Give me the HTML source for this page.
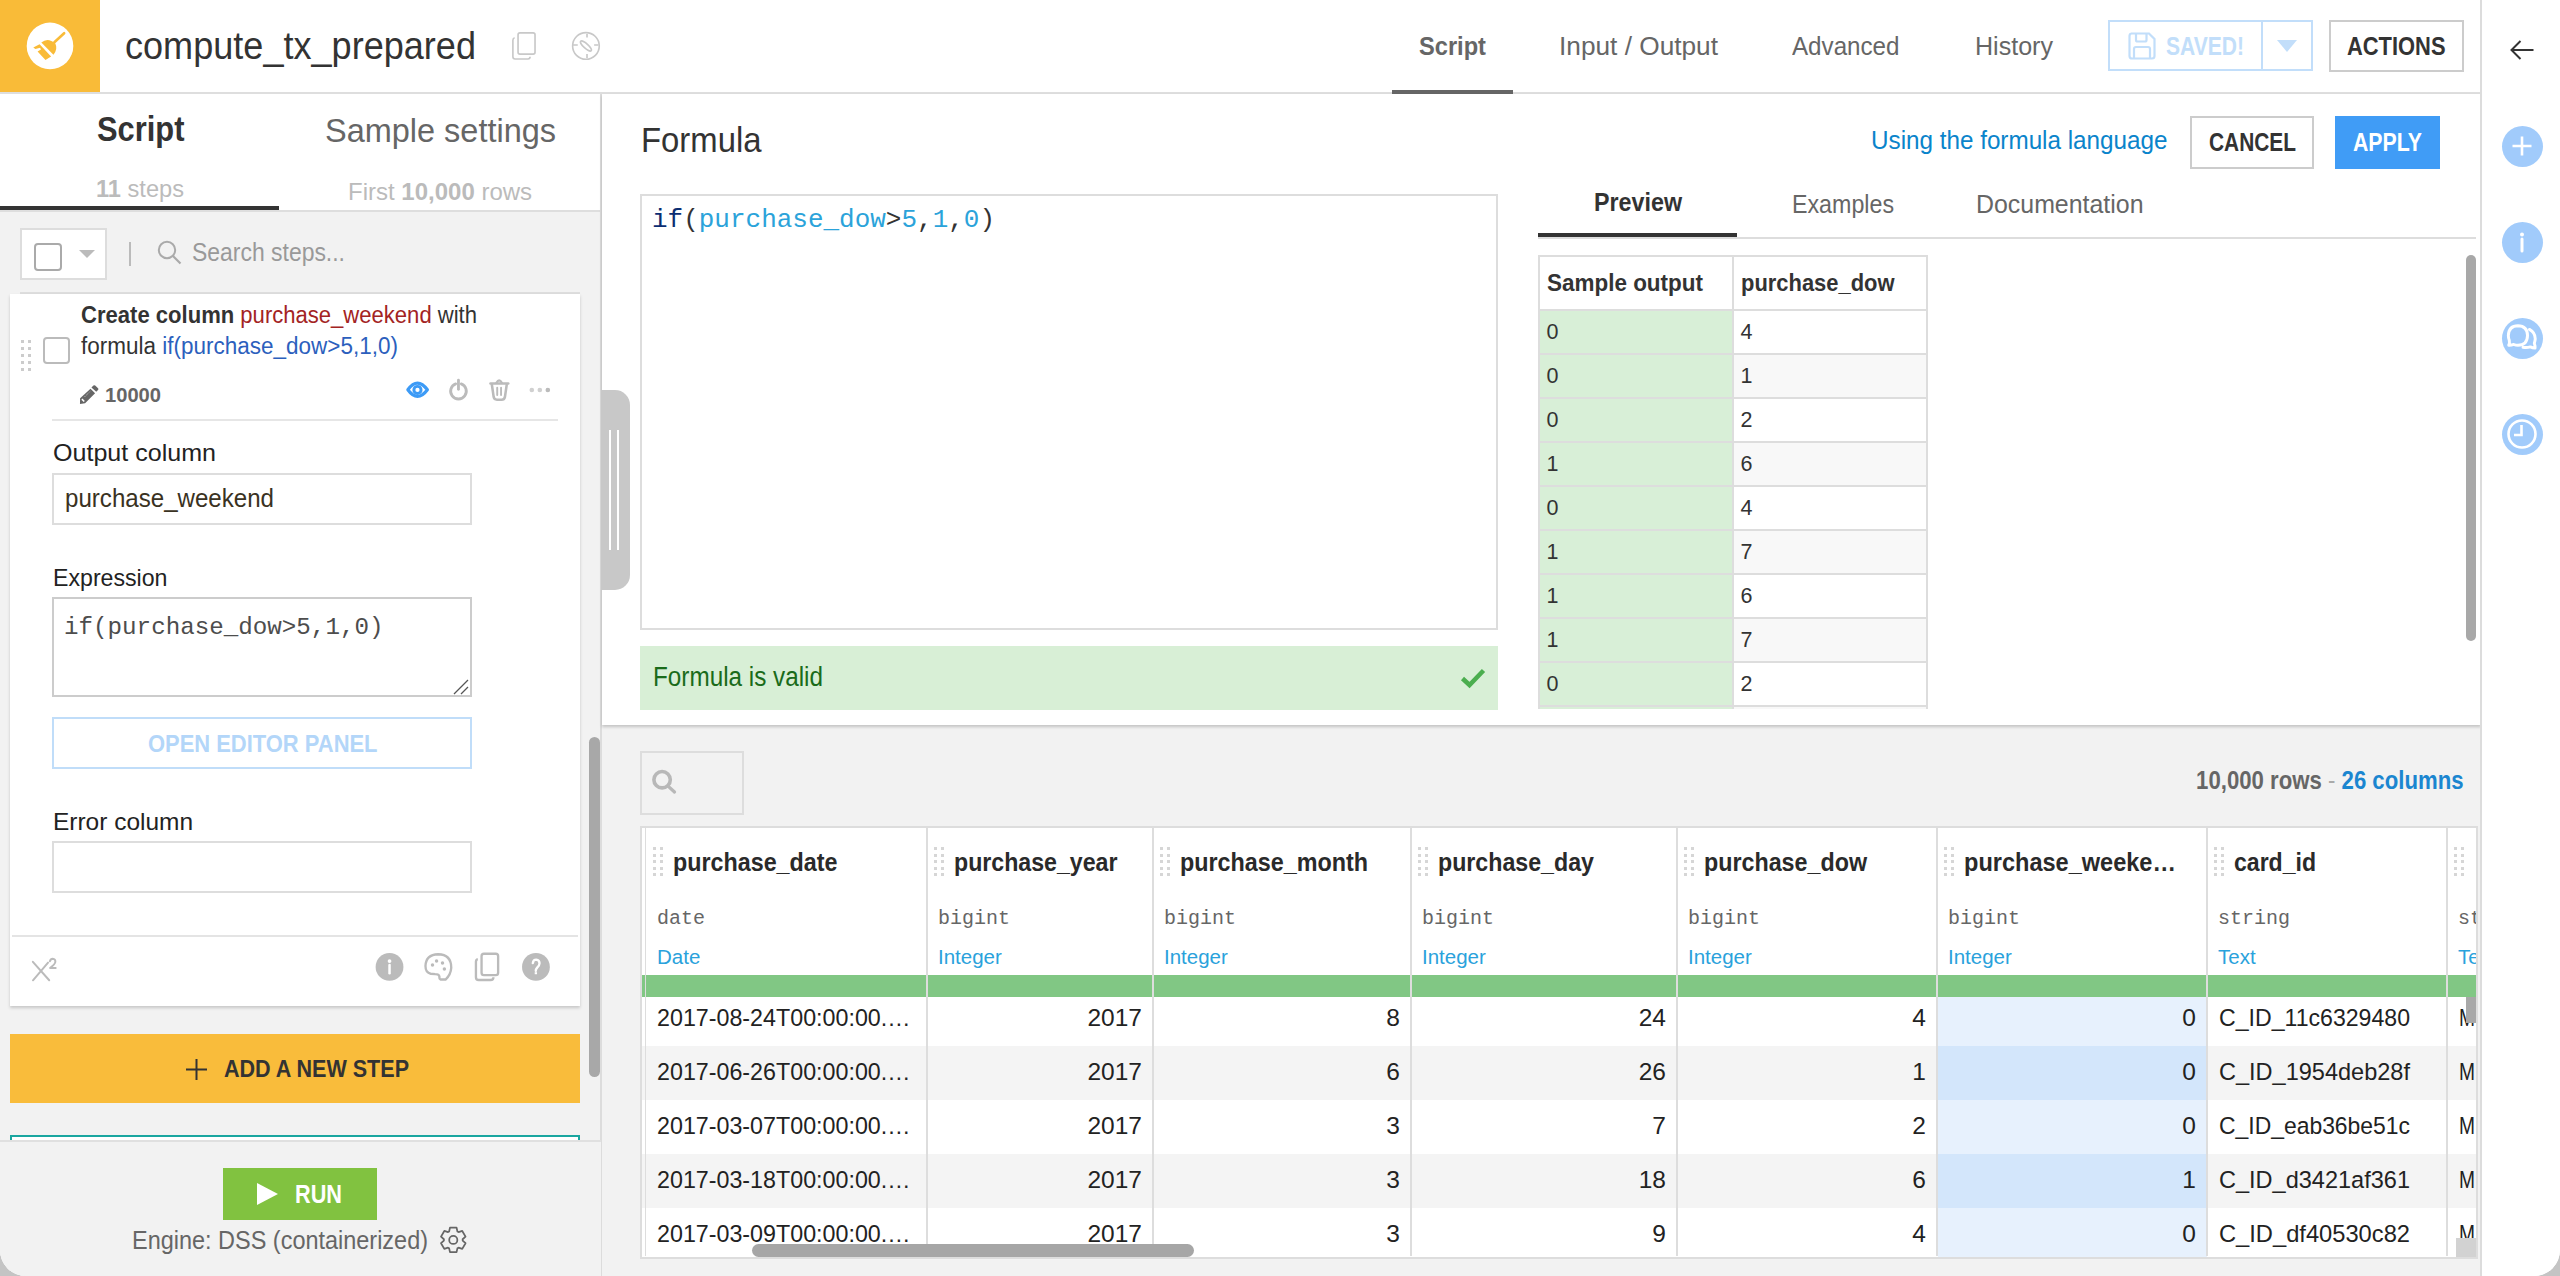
<!DOCTYPE html>
<html><head><meta charset="utf-8"><title>compute_tx_prepared</title><style>
html,body{margin:0;padding:0;}
body{width:2560px;height:1276px;overflow:hidden;background:#c4c4c4;position:relative;font-family:'Liberation Sans',sans-serif;}
#app{position:absolute;left:0;top:0;width:2560px;height:1276px;background:#fff;overflow:hidden;border-radius:0 0 26px 26px;}
.a{position:absolute;white-space:nowrap;}
svg.a{overflow:visible;}
</style></head><body><div id="app">
<div class="a" style="left:0px;top:0px;width:2481px;height:92px;background:#fff;"></div>
<div class="a" style="left:0px;top:92px;width:2481px;height:2px;background:#dedede;"></div>
<div class="a" style="left:0px;top:0px;width:100px;height:92px;background:#f9bb38;"></div>
<svg class="a" style="left:24px;top:20px" width="52" height="52" viewBox="0 0 1276 1276">
<circle cx="638" cy="636" r="572" fill="#fff"/>
<g fill="#f9bb38">
<path d="M745 545 L985 325" stroke="#f9bb38" stroke-width="64" stroke-linecap="round"/>
<path d="M425 552 Q585 415 770 578 Q835 720 722 855 Z"/>
<path d="M228 672 L382 598 L665 893 L527 982 L333 770 L415 722 L395 683 L280 712 Z"/>
</g></svg>
<div class="t a" style="top:25.85px;font-size:39px;line-height:39px;color:#333;font-weight:400;font-family:'Liberation Sans', sans-serif;left:125px;transform-origin:0 0;transform:scaleX(0.9251);">compute_tx_prepared</div>
<svg class="a" style="left:500px;top:24px" width="110" height="44" viewBox="0 0 2560 1024">
<g fill="none" stroke="#c8c8c8" stroke-width="38">
<rect x="420" y="205" width="395" height="495" rx="45"/>
<path d="M340 322 Q300 335 300 380 V765 Q300 815 350 815 H650 Q700 815 700 765"/>
<circle cx="2000" cy="510" r="310"/>
<path d="M2025 230 V315 M2025 700 V790 M1700 490 H1810 M2190 490 H2290"/>
<ellipse cx="2000" cy="512" rx="165" ry="52" transform="rotate(42 2000 512)"/>
</g></svg>
<div class="t a" style="top:32.90px;font-size:26px;line-height:26px;color:#666;font-weight:700;font-family:'Liberation Sans', sans-serif;left:1419px;transform-origin:0 0;transform:scaleX(0.9092);">Script</div>
<div class="a" style="left:1392px;top:90px;width:121px;height:4px;background:#666;"></div>
<div class="t a" style="top:32.90px;font-size:26px;line-height:26px;color:#666;font-weight:400;font-family:'Liberation Sans', sans-serif;left:1559px;transform-origin:0 0;transform:scaleX(1.0091);">Input / Output</div>
<div class="t a" style="top:32.90px;font-size:26px;line-height:26px;color:#666;font-weight:400;font-family:'Liberation Sans', sans-serif;left:1791.5px;transform-origin:0 0;transform:scaleX(0.9295);">Advanced</div>
<div class="t a" style="top:32.90px;font-size:26px;line-height:26px;color:#666;font-weight:400;font-family:'Liberation Sans', sans-serif;left:1975px;transform-origin:0 0;transform:scaleX(0.9641);">History</div>
<div class="a" style="left:2108px;top:20px;width:205px;height:51px;box-sizing:border-box;border:2px solid #c2defa;background:#fff;"></div>
<div class="a" style="left:2261px;top:20px;width:2px;height:51px;background:#c2defa;"></div>
<svg class="a" style="left:2128px;top:32px" width="28" height="28" viewBox="0 0 28 28">
<path d="M3 1.5 H21 L26.5 7 V24 Q26.5 26.5 24 26.5 H4 Q1.5 26.5 1.5 24 V4 Q1.5 1.5 4 1.5 Z" fill="none" stroke="#c2defa" stroke-width="2.2"/>
<path d="M8 2 V8 Q8 9.5 9.5 9.5 H17 Q18.5 9.5 18.5 8 V2" fill="none" stroke="#c2defa" stroke-width="2.2"/>
<path d="M6 26 V17 Q6 15 8 15 H20 Q22 15 22 17 V26" fill="none" stroke="#c2defa" stroke-width="2.2"/>
</svg>
<div class="t a" style="top:33.75px;font-size:25px;line-height:25px;color:#c2defa;font-weight:700;font-family:'Liberation Sans', sans-serif;left:2165.5px;transform-origin:0 0;transform:scaleX(0.8422);">SAVED!</div>
<svg class="a" style="left:2277px;top:40px" width="20" height="12" viewBox="0 0 20 12"><path d="M0 0 H20 L10 12 Z" fill="#c2defa"/></svg>
<div class="a" style="left:2329px;top:20px;width:135px;height:52px;box-sizing:border-box;border:2px solid #ccc;background:#fff;"></div>
<div class="t a" style="top:33.75px;font-size:25px;line-height:25px;color:#333;font-weight:700;font-family:'Liberation Sans', sans-serif;left:2347px;transform-origin:0 0;transform:scaleX(0.8756);">ACTIONS</div>
<div class="a" style="left:0px;top:94px;width:601px;height:1182px;background:#f2f2f2;"></div>
<div class="a" style="left:0px;top:94px;width:601px;height:116px;background:#fff;"></div>
<div class="a" style="left:0px;top:210px;width:601px;height:2px;background:#dedede;"></div>
<div class="a" style="left:0px;top:206px;width:279px;height:4px;background:#333;"></div>
<div class="a" style="left:600px;top:94px;width:2px;height:1182px;background:#dcdcdc;"></div>
<div class="t a" style="top:111.25px;font-size:35px;line-height:35px;color:#333;font-weight:700;font-family:'Liberation Sans', sans-serif;left:96.5px;transform-origin:0 0;transform:scaleX(0.8820);">Script</div>
<div class="t a" style="top:113.10px;font-size:34px;line-height:34px;color:#666;font-weight:400;font-family:'Liberation Sans', sans-serif;left:324.5px;transform-origin:0 0;transform:scaleX(0.9549);">Sample settings</div>
<div class="t a" style="top:177.18px;font-size:24.5px;line-height:24.5px;color:#bbb;font-weight:400;font-family:'Liberation Sans', sans-serif;left:96px;transform-origin:0 0;transform:scaleX(0.9641);"><b>11</b> steps</div>
<div class="t a" style="top:179.60px;font-size:24px;line-height:24px;color:#bbb;font-weight:400;font-family:'Liberation Sans', sans-serif;left:348px;">First <b>10,000</b> rows</div>
<div class="a" style="left:20px;top:228px;width:87px;height:52px;box-sizing:border-box;border:2px solid #ddd;background:#fff;"></div>
<div class="a" style="left:34px;top:243px;width:28px;height:28px;box-sizing:border-box;border:2px solid #aaa;border-radius:4px;background:#fff;"></div>
<svg class="a" style="left:79px;top:250px" width="16" height="8" viewBox="0 0 16 8"><path d="M0 0 H16 L8 8 Z" fill="#bbb"/></svg>
<div class="a" style="left:129px;top:242px;width:2px;height:24px;background:#bbb;"></div>
<svg class="a" style="left:157px;top:240px" width="25" height="25" viewBox="0 0 25 25"><circle cx="10" cy="10" r="8.2" fill="none" stroke="#aaa" stroke-width="2"/><path d="M16 16 L23.5 23.5" stroke="#aaa" stroke-width="2.2"/></svg>
<div class="t a" style="top:238.90px;font-size:26px;line-height:26px;color:#999;font-weight:400;font-family:'Liberation Sans', sans-serif;left:192px;transform-origin:0 0;transform:scaleX(0.8822);">Search steps...</div>
<div class="a" style="left:20px;top:292px;width:560px;height:2px;background:#ddd;"></div>
<div class="a" style="left:10px;top:294px;width:570px;height:712px;background:#fff;box-shadow:0 2px 3px rgba(0,0,0,0.18);"></div>
<div class="a" style="left:21px;top:340px;width:3px;height:3px;background:#ccc;"></div>
<div class="a" style="left:28px;top:340px;width:3px;height:3px;background:#ccc;"></div>
<div class="a" style="left:21px;top:347px;width:3px;height:3px;background:#ccc;"></div>
<div class="a" style="left:28px;top:347px;width:3px;height:3px;background:#ccc;"></div>
<div class="a" style="left:21px;top:354px;width:3px;height:3px;background:#ccc;"></div>
<div class="a" style="left:28px;top:354px;width:3px;height:3px;background:#ccc;"></div>
<div class="a" style="left:21px;top:361px;width:3px;height:3px;background:#ccc;"></div>
<div class="a" style="left:28px;top:361px;width:3px;height:3px;background:#ccc;"></div>
<div class="a" style="left:21px;top:368px;width:3px;height:3px;background:#ccc;"></div>
<div class="a" style="left:28px;top:368px;width:3px;height:3px;background:#ccc;"></div>
<div class="a" style="left:43px;top:337px;width:27px;height:27px;box-sizing:border-box;border:2px solid #bbb;border-radius:4px;background:#fff;"></div>
<div class="t a" style="top:304.02px;font-size:23.5px;line-height:23.5px;color:#333;font-weight:400;font-family:'Liberation Sans', sans-serif;left:81px;transform-origin:0 0;transform:scaleX(0.9386);"><b>Create column</b> <span style="color:#a32323">purchase_weekend</span> with</div>
<div class="t a" style="top:335.02px;font-size:23.5px;line-height:23.5px;color:#333;font-weight:400;font-family:'Liberation Sans', sans-serif;left:81px;transform-origin:0 0;transform:scaleX(0.9573);">formula <span style="color:#2c5fbd">if(purchase_dow&gt;5,1,0)</span></div>
<svg class="a" style="left:70px;top:370px" width="100" height="40" viewBox="0 0 2560 1024">
<path d="M258 722 L525 478 L642 598 L385 852 L255 868 Z" fill="#666"/>
<path d="M548 448 L600 398 Q622 378 645 398 L718 468 Q738 490 718 512 L672 556 Z" fill="#666"/>
<path d="M305 745 L365 805" stroke="#fff" stroke-width="40"/>
<path d="M370 690 L520 545" stroke="#fff" stroke-width="14" stroke-dasharray="30 20"/>
</svg>
<div class="t a" style="top:384.57px;font-size:20.5px;line-height:20.5px;color:#666;font-weight:700;font-family:'Liberation Sans', sans-serif;left:104.5px;transform-origin:0 0;transform:scaleX(0.9822);">10000</div>
<svg class="a" style="left:396px;top:372px" width="164" height="36" viewBox="0 0 2560 562">
<path d="M185 278 Q335 70 490 278 Q335 486 185 278 Z" fill="none" stroke="#3d9bf6" stroke-width="50" stroke-linejoin="round"/>
<circle cx="335" cy="280" r="56" fill="none" stroke="#3d9bf6" stroke-width="46"/>
<g fill="none" stroke="#bbb" stroke-linecap="round">
<path d="M932 185 A122 122 0 1 0 1018 185" stroke-width="44"/>
<path d="M975 128 V270" stroke-width="44"/>
<path d="M1475 180 H1752" stroke-width="40"/>
<path d="M1568 168 Q1610 95 1652 168" stroke-width="36"/>
<path d="M1497 200 L1525 392 Q1533 432 1575 432 H1650 Q1690 432 1700 392 L1728 200" stroke-width="40" stroke-linejoin="round"/>
<path d="M1580 245 V360 M1640 245 V360" stroke-width="30"/>
</g>
<circle cx="2120" cy="280" r="36" fill="#d0d0d0"/><circle cx="2245" cy="280" r="36" fill="#d0d0d0"/><circle cx="2370" cy="280" r="36" fill="#bbb"/>
</svg>
<div class="a" style="left:52px;top:419px;width:506px;height:2px;background:#e6e6e6;"></div>
<div class="t a" style="top:441.10px;font-size:24px;line-height:24px;color:#222;font-weight:400;font-family:'Liberation Sans', sans-serif;left:53px;transform-origin:0 0;transform:scaleX(1.0442);">Output column</div>
<div class="a" style="left:52px;top:473px;width:420px;height:52px;box-sizing:border-box;border:2px solid #ddd;background:#fff;"></div>
<div class="t a" style="top:485.40px;font-size:26px;line-height:26px;color:#3a3222;font-weight:400;font-family:'Liberation Sans', sans-serif;left:65px;transform-origin:0 0;transform:scaleX(0.9268);">purchase_weekend</div>
<div class="t a" style="top:566.10px;font-size:24px;line-height:24px;color:#222;font-weight:400;font-family:'Liberation Sans', sans-serif;left:53px;transform-origin:0 0;transform:scaleX(0.9643);">Expression</div>
<div class="a" style="left:52px;top:597px;width:420px;height:100px;box-sizing:border-box;border:2px solid #ccc;background:#fff;"></div>
<div class="t a" style="top:616.10px;font-size:24px;line-height:24px;color:#4d4d4d;font-weight:400;font-family:'Liberation Mono', monospace;left:64px;transform-origin:0 0;transform:scaleX(1.0083);">if(purchase_dow&gt;5,1,0)</div>
<svg class="a" style="left:452px;top:678px" width="17" height="17" viewBox="0 0 17 17"><path d="M16 2 L2 16 M16 9 L9 16" stroke="#555" stroke-width="1.3"/></svg>
<div class="a" style="left:52px;top:717px;width:420px;height:52px;box-sizing:border-box;border:2px solid #c0ddf9;background:#fff;"></div>
<div class="t a" style="top:731.60px;font-size:24px;line-height:24px;color:#b3d6f9;font-weight:700;font-family:'Liberation Sans', sans-serif;left:147.5px;transform-origin:0 0;transform:scaleX(0.9138);">OPEN EDITOR PANEL</div>
<div class="t a" style="top:810.10px;font-size:24px;line-height:24px;color:#222;font-weight:400;font-family:'Liberation Sans', sans-serif;left:53px;transform-origin:0 0;transform:scaleX(1.0191);">Error column</div>
<div class="a" style="left:52px;top:841px;width:420px;height:52px;box-sizing:border-box;border:2px solid #ddd;background:#fff;"></div>
<div class="a" style="left:12px;top:935px;width:566px;height:2px;background:#e4e4e4;"></div>
<svg class="a" style="left:20px;top:945px" width="60" height="45" viewBox="0 0 1701 1276">
<g fill="none" stroke="#bbb" stroke-width="56" stroke-linecap="round">
<path d="M365 478 L828 1000 M795 500 L368 1000"/>
<path d="M848 462 Q868 390 928 390 Q1008 395 1002 482 Q995 540 852 650 H1012" stroke-linejoin="round"/>
</g></svg>
<svg class="a" style="left:360px;top:945px" width="200" height="45" viewBox="0 0 2560 576">
<circle cx="378" cy="280" r="178" fill="#bbb"/>
<circle cx="378" cy="205" r="24" fill="#fff"/>
<path d="M378 255 V362" stroke="#fff" stroke-width="32" stroke-linecap="round"/>
<path d="M1000 118 Q1168 122 1168 290 Q1163 380 1095 442 L1032 442 Q1014 438 1016 402 Q1012 372 962 372 L905 368 Q838 356 838 270 Q842 122 1000 118 Z" fill="none" stroke="#bbb" stroke-width="30" stroke-linejoin="round"/>
<circle cx="928" cy="255" r="22" fill="#bbb"/><circle cx="980" cy="205" r="22" fill="#bbb"/><circle cx="1056" cy="230" r="22" fill="#bbb"/><circle cx="1080" cy="307" r="22" fill="#bbb"/>
<rect x="1556" y="112" width="212" height="274" rx="30" fill="none" stroke="#bbb" stroke-width="30"/>
<path d="M1508 180 Q1484 185 1484 215 V412 Q1484 448 1518 448 H1672 Q1708 448 1708 412" fill="none" stroke="#bbb" stroke-width="30"/>
<circle cx="2252" cy="280" r="178" fill="#bbb"/>
<path d="M2212 232 Q2218 188 2256 188 Q2298 192 2298 235 Q2298 262 2268 290 Q2248 312 2250 332" fill="none" stroke="#fff" stroke-width="30" stroke-linecap="round"/>
<rect x="2236" y="348" width="30" height="26" fill="#fff"/>
</svg>
<div class="a" style="left:10px;top:1034px;width:570px;height:69px;background:#f9bc3b;"></div>
<svg class="a" style="left:186px;top:1059px" width="21" height="21" viewBox="0 0 21 21"><path d="M10.5 0 V21 M0 10.5 H21" stroke="#333" stroke-width="2"/></svg>
<div class="t a" style="top:1056.60px;font-size:24px;line-height:24px;color:#333;font-weight:700;font-family:'Liberation Sans', sans-serif;left:224px;transform-origin:0 0;transform:scaleX(0.8970);">ADD A NEW STEP</div>
<div class="a" style="left:10px;top:1135px;width:570px;height:6px;box-sizing:border-box;border:2px solid #1aa6a0;border-bottom:none;background:#fff;"></div>
<div class="a" style="left:0px;top:1140px;width:601px;height:136px;background:#f2f2f2;"></div>
<div class="a" style="left:0px;top:1140px;width:601px;height:2px;background:#e0e0e0;"></div>
<div class="a" style="left:589px;top:737px;width:11px;height:340px;background:#a8a8a8;border-radius:6px;"></div>
<div class="a" style="left:223px;top:1168px;width:154px;height:52px;background:#81c240;"></div>
<svg class="a" style="left:257px;top:1183px" width="21" height="22" viewBox="0 0 21 22"><path d="M0 0 L21 11 L0 22 Z" fill="#fff"/></svg>
<div class="t a" style="top:1181.75px;font-size:25px;line-height:25px;color:#fff;font-weight:700;font-family:'Liberation Sans', sans-serif;left:295px;transform-origin:0 0;transform:scaleX(0.8676);">RUN</div>
<div class="t a" style="top:1226.90px;font-size:26px;line-height:26px;color:#666;font-weight:400;font-family:'Liberation Sans', sans-serif;left:132px;transform-origin:0 0;transform:scaleX(0.9023);">Engine: DSS (containerized)</div>
<svg class="a" style="left:434px;top:1220px" width="40" height="40" viewBox="0 0 1276 1276">
<path d="M747 365 L720 244 L510 244 L483 365 L447 386 L329 349 L224 530 L316 614 L316 656 L224 740 L329 921 L447 884 L483 905 L510 1026 L720 1026 L747 905 L783 884 L901 921 L1006 740 L914 656 L914 614 L1006 530 L901 349 L783 386 Z" fill="none" stroke="#666" stroke-width="56" stroke-linejoin="round"/>
<circle cx="615" cy="635" r="130" fill="none" stroke="#666" stroke-width="56"/>
</svg>
<div class="a" style="left:602px;top:94px;width:1879px;height:1182px;background:#f2f2f2;"></div>
<div class="a" style="left:640px;top:751px;width:104px;height:64px;box-sizing:border-box;border:2px solid #ddd;background:#f2f2f2;"></div>
<svg class="a" style="left:652px;top:769px" width="25" height="25" viewBox="0 0 25 25"><circle cx="10.1" cy="10.7" r="8.2" fill="none" stroke="#b8b8b8" stroke-width="3.6"/><path d="M16.6 17.6 L22.5 23" stroke="#b8b8b8" stroke-width="3.3" stroke-linecap="round"/></svg>
<div class="t a" style="top:767.75px;font-size:25px;line-height:25px;color:#666;font-weight:400;font-family:'Liberation Sans', sans-serif;right:96.5px;transform-origin:100% 0;transform:scaleX(0.8870);"><b>10,000 rows</b> <span style="color:#aaa">-</span> <b style="color:#1b86d0">26 columns</b></div>
<div class="a" style="left:640px;top:826px;width:1838px;height:433px;box-sizing:border-box;border:2px solid #ddd;background:#fff;"></div>
<div class="a" style="left:642px;top:997px;width:1834px;height:48.5px;background:#fff;"></div>
<div class="a" style="left:642px;top:1045.5px;width:1834px;height:54.0px;background:#f4f4f4;"></div>
<div class="a" style="left:642px;top:1099.5px;width:1834px;height:54.0px;background:#fff;"></div>
<div class="a" style="left:642px;top:1153.5px;width:1834px;height:54.0px;background:#f4f4f4;"></div>
<div class="a" style="left:642px;top:1207.5px;width:1834px;height:49.5px;background:#fff;"></div>
<div class="a" style="left:642px;top:975px;width:1834px;height:22px;background:#81c784;"></div>
<div class="a" style="left:1938px;top:997px;width:269px;height:48.5px;background:#e7f1fd;"></div>
<div class="a" style="left:1938px;top:1045.5px;width:269px;height:54.0px;background:#d3e6fb;"></div>
<div class="a" style="left:1938px;top:1099.5px;width:269px;height:54.0px;background:#e7f1fd;"></div>
<div class="a" style="left:1938px;top:1153.5px;width:269px;height:54.0px;background:#d3e6fb;"></div>
<div class="a" style="left:1938px;top:1207.5px;width:269px;height:49.5px;background:#e7f1fd;"></div>
<div class="a" style="left:926px;top:828px;width:2px;height:428px;background:#ddd;"></div>
<div class="a" style="left:1152px;top:828px;width:2px;height:428px;background:#ddd;"></div>
<div class="a" style="left:1410px;top:828px;width:2px;height:428px;background:#ddd;"></div>
<div class="a" style="left:1676px;top:828px;width:2px;height:428px;background:#ddd;"></div>
<div class="a" style="left:1936px;top:828px;width:2px;height:428px;background:#ddd;"></div>
<div class="a" style="left:2206px;top:828px;width:2px;height:428px;background:#ddd;"></div>
<div class="a" style="left:2446px;top:828px;width:2px;height:428px;background:#ddd;"></div>
<div class="a" style="left:645px;top:828px;width:1px;height:428px;background:#ddd;"></div>
<div class="a" style="left:653px;top:847.0px;width:3px;height:3px;background:#d6d6d6;"></div>
<div class="a" style="left:660px;top:847.0px;width:3px;height:3px;background:#d6d6d6;"></div>
<div class="a" style="left:653px;top:853.6px;width:3px;height:3px;background:#d6d6d6;"></div>
<div class="a" style="left:660px;top:853.6px;width:3px;height:3px;background:#d6d6d6;"></div>
<div class="a" style="left:653px;top:860.2px;width:3px;height:3px;background:#d6d6d6;"></div>
<div class="a" style="left:660px;top:860.2px;width:3px;height:3px;background:#d6d6d6;"></div>
<div class="a" style="left:653px;top:866.8px;width:3px;height:3px;background:#d6d6d6;"></div>
<div class="a" style="left:660px;top:866.8px;width:3px;height:3px;background:#d6d6d6;"></div>
<div class="a" style="left:653px;top:873.4px;width:3px;height:3px;background:#d6d6d6;"></div>
<div class="a" style="left:660px;top:873.4px;width:3px;height:3px;background:#d6d6d6;"></div>
<div class="t a" style="top:850.33px;font-size:25.5px;line-height:25.5px;color:#2a2a2a;font-weight:700;font-family:'Liberation Sans', sans-serif;left:673px;transform-origin:0 0;transform:scaleX(0.9139);">purchase_date</div>
<div class="t a" style="top:908.67px;font-size:20px;line-height:20px;color:#666;font-weight:400;font-family:'Liberation Mono', monospace;left:657px;">date</div>
<div class="t a" style="top:946.58px;font-size:20.5px;line-height:20.5px;color:#2aa2dc;font-weight:400;font-family:'Liberation Sans', sans-serif;left:657px;">Date</div>
<div class="a" style="left:934px;top:847.0px;width:3px;height:3px;background:#d6d6d6;"></div>
<div class="a" style="left:941px;top:847.0px;width:3px;height:3px;background:#d6d6d6;"></div>
<div class="a" style="left:934px;top:853.6px;width:3px;height:3px;background:#d6d6d6;"></div>
<div class="a" style="left:941px;top:853.6px;width:3px;height:3px;background:#d6d6d6;"></div>
<div class="a" style="left:934px;top:860.2px;width:3px;height:3px;background:#d6d6d6;"></div>
<div class="a" style="left:941px;top:860.2px;width:3px;height:3px;background:#d6d6d6;"></div>
<div class="a" style="left:934px;top:866.8px;width:3px;height:3px;background:#d6d6d6;"></div>
<div class="a" style="left:941px;top:866.8px;width:3px;height:3px;background:#d6d6d6;"></div>
<div class="a" style="left:934px;top:873.4px;width:3px;height:3px;background:#d6d6d6;"></div>
<div class="a" style="left:941px;top:873.4px;width:3px;height:3px;background:#d6d6d6;"></div>
<div class="t a" style="top:850.33px;font-size:25.5px;line-height:25.5px;color:#2a2a2a;font-weight:700;font-family:'Liberation Sans', sans-serif;left:954px;transform-origin:0 0;transform:scaleX(0.9081);">purchase_year</div>
<div class="t a" style="top:908.67px;font-size:20px;line-height:20px;color:#666;font-weight:400;font-family:'Liberation Mono', monospace;left:938px;">bigint</div>
<div class="t a" style="top:946.58px;font-size:20.5px;line-height:20.5px;color:#2aa2dc;font-weight:400;font-family:'Liberation Sans', sans-serif;left:938px;">Integer</div>
<div class="a" style="left:1160px;top:847.0px;width:3px;height:3px;background:#d6d6d6;"></div>
<div class="a" style="left:1167px;top:847.0px;width:3px;height:3px;background:#d6d6d6;"></div>
<div class="a" style="left:1160px;top:853.6px;width:3px;height:3px;background:#d6d6d6;"></div>
<div class="a" style="left:1167px;top:853.6px;width:3px;height:3px;background:#d6d6d6;"></div>
<div class="a" style="left:1160px;top:860.2px;width:3px;height:3px;background:#d6d6d6;"></div>
<div class="a" style="left:1167px;top:860.2px;width:3px;height:3px;background:#d6d6d6;"></div>
<div class="a" style="left:1160px;top:866.8px;width:3px;height:3px;background:#d6d6d6;"></div>
<div class="a" style="left:1167px;top:866.8px;width:3px;height:3px;background:#d6d6d6;"></div>
<div class="a" style="left:1160px;top:873.4px;width:3px;height:3px;background:#d6d6d6;"></div>
<div class="a" style="left:1167px;top:873.4px;width:3px;height:3px;background:#d6d6d6;"></div>
<div class="t a" style="top:850.33px;font-size:25.5px;line-height:25.5px;color:#2a2a2a;font-weight:700;font-family:'Liberation Sans', sans-serif;left:1180px;transform-origin:0 0;transform:scaleX(0.9150);">purchase_month</div>
<div class="t a" style="top:908.67px;font-size:20px;line-height:20px;color:#666;font-weight:400;font-family:'Liberation Mono', monospace;left:1164px;">bigint</div>
<div class="t a" style="top:946.58px;font-size:20.5px;line-height:20.5px;color:#2aa2dc;font-weight:400;font-family:'Liberation Sans', sans-serif;left:1164px;">Integer</div>
<div class="a" style="left:1418px;top:847.0px;width:3px;height:3px;background:#d6d6d6;"></div>
<div class="a" style="left:1425px;top:847.0px;width:3px;height:3px;background:#d6d6d6;"></div>
<div class="a" style="left:1418px;top:853.6px;width:3px;height:3px;background:#d6d6d6;"></div>
<div class="a" style="left:1425px;top:853.6px;width:3px;height:3px;background:#d6d6d6;"></div>
<div class="a" style="left:1418px;top:860.2px;width:3px;height:3px;background:#d6d6d6;"></div>
<div class="a" style="left:1425px;top:860.2px;width:3px;height:3px;background:#d6d6d6;"></div>
<div class="a" style="left:1418px;top:866.8px;width:3px;height:3px;background:#d6d6d6;"></div>
<div class="a" style="left:1425px;top:866.8px;width:3px;height:3px;background:#d6d6d6;"></div>
<div class="a" style="left:1418px;top:873.4px;width:3px;height:3px;background:#d6d6d6;"></div>
<div class="a" style="left:1425px;top:873.4px;width:3px;height:3px;background:#d6d6d6;"></div>
<div class="t a" style="top:850.33px;font-size:25.5px;line-height:25.5px;color:#2a2a2a;font-weight:700;font-family:'Liberation Sans', sans-serif;left:1438px;transform-origin:0 0;transform:scaleX(0.9095);">purchase_day</div>
<div class="t a" style="top:908.67px;font-size:20px;line-height:20px;color:#666;font-weight:400;font-family:'Liberation Mono', monospace;left:1422px;">bigint</div>
<div class="t a" style="top:946.58px;font-size:20.5px;line-height:20.5px;color:#2aa2dc;font-weight:400;font-family:'Liberation Sans', sans-serif;left:1422px;">Integer</div>
<div class="a" style="left:1684px;top:847.0px;width:3px;height:3px;background:#d6d6d6;"></div>
<div class="a" style="left:1691px;top:847.0px;width:3px;height:3px;background:#d6d6d6;"></div>
<div class="a" style="left:1684px;top:853.6px;width:3px;height:3px;background:#d6d6d6;"></div>
<div class="a" style="left:1691px;top:853.6px;width:3px;height:3px;background:#d6d6d6;"></div>
<div class="a" style="left:1684px;top:860.2px;width:3px;height:3px;background:#d6d6d6;"></div>
<div class="a" style="left:1691px;top:860.2px;width:3px;height:3px;background:#d6d6d6;"></div>
<div class="a" style="left:1684px;top:866.8px;width:3px;height:3px;background:#d6d6d6;"></div>
<div class="a" style="left:1691px;top:866.8px;width:3px;height:3px;background:#d6d6d6;"></div>
<div class="a" style="left:1684px;top:873.4px;width:3px;height:3px;background:#d6d6d6;"></div>
<div class="a" style="left:1691px;top:873.4px;width:3px;height:3px;background:#d6d6d6;"></div>
<div class="t a" style="top:850.33px;font-size:25.5px;line-height:25.5px;color:#2a2a2a;font-weight:700;font-family:'Liberation Sans', sans-serif;left:1704px;transform-origin:0 0;transform:scaleX(0.9128);">purchase_dow</div>
<div class="t a" style="top:908.67px;font-size:20px;line-height:20px;color:#666;font-weight:400;font-family:'Liberation Mono', monospace;left:1688px;">bigint</div>
<div class="t a" style="top:946.58px;font-size:20.5px;line-height:20.5px;color:#2aa2dc;font-weight:400;font-family:'Liberation Sans', sans-serif;left:1688px;">Integer</div>
<div class="a" style="left:1944px;top:847.0px;width:3px;height:3px;background:#d6d6d6;"></div>
<div class="a" style="left:1951px;top:847.0px;width:3px;height:3px;background:#d6d6d6;"></div>
<div class="a" style="left:1944px;top:853.6px;width:3px;height:3px;background:#d6d6d6;"></div>
<div class="a" style="left:1951px;top:853.6px;width:3px;height:3px;background:#d6d6d6;"></div>
<div class="a" style="left:1944px;top:860.2px;width:3px;height:3px;background:#d6d6d6;"></div>
<div class="a" style="left:1951px;top:860.2px;width:3px;height:3px;background:#d6d6d6;"></div>
<div class="a" style="left:1944px;top:866.8px;width:3px;height:3px;background:#d6d6d6;"></div>
<div class="a" style="left:1951px;top:866.8px;width:3px;height:3px;background:#d6d6d6;"></div>
<div class="a" style="left:1944px;top:873.4px;width:3px;height:3px;background:#d6d6d6;"></div>
<div class="a" style="left:1951px;top:873.4px;width:3px;height:3px;background:#d6d6d6;"></div>
<div class="t a" style="top:850.33px;font-size:25.5px;line-height:25.5px;color:#2a2a2a;font-weight:700;font-family:'Liberation Sans', sans-serif;left:1964px;transform-origin:0 0;transform:scaleX(0.9232);">purchase_weeke…</div>
<div class="t a" style="top:908.67px;font-size:20px;line-height:20px;color:#666;font-weight:400;font-family:'Liberation Mono', monospace;left:1948px;">bigint</div>
<div class="t a" style="top:946.58px;font-size:20.5px;line-height:20.5px;color:#2aa2dc;font-weight:400;font-family:'Liberation Sans', sans-serif;left:1948px;">Integer</div>
<div class="a" style="left:2214px;top:847.0px;width:3px;height:3px;background:#d6d6d6;"></div>
<div class="a" style="left:2221px;top:847.0px;width:3px;height:3px;background:#d6d6d6;"></div>
<div class="a" style="left:2214px;top:853.6px;width:3px;height:3px;background:#d6d6d6;"></div>
<div class="a" style="left:2221px;top:853.6px;width:3px;height:3px;background:#d6d6d6;"></div>
<div class="a" style="left:2214px;top:860.2px;width:3px;height:3px;background:#d6d6d6;"></div>
<div class="a" style="left:2221px;top:860.2px;width:3px;height:3px;background:#d6d6d6;"></div>
<div class="a" style="left:2214px;top:866.8px;width:3px;height:3px;background:#d6d6d6;"></div>
<div class="a" style="left:2221px;top:866.8px;width:3px;height:3px;background:#d6d6d6;"></div>
<div class="a" style="left:2214px;top:873.4px;width:3px;height:3px;background:#d6d6d6;"></div>
<div class="a" style="left:2221px;top:873.4px;width:3px;height:3px;background:#d6d6d6;"></div>
<div class="t a" style="top:850.33px;font-size:25.5px;line-height:25.5px;color:#2a2a2a;font-weight:700;font-family:'Liberation Sans', sans-serif;left:2234px;transform-origin:0 0;transform:scaleX(0.9039);">card_id</div>
<div class="t a" style="top:908.67px;font-size:20px;line-height:20px;color:#666;font-weight:400;font-family:'Liberation Mono', monospace;left:2218px;">string</div>
<div class="t a" style="top:946.58px;font-size:20.5px;line-height:20.5px;color:#2aa2dc;font-weight:400;font-family:'Liberation Sans', sans-serif;left:2218px;">Text</div>
<div class="a" style="left:2454px;top:847.0px;width:3px;height:3px;background:#d6d6d6;"></div>
<div class="a" style="left:2461px;top:847.0px;width:3px;height:3px;background:#d6d6d6;"></div>
<div class="a" style="left:2454px;top:853.6px;width:3px;height:3px;background:#d6d6d6;"></div>
<div class="a" style="left:2461px;top:853.6px;width:3px;height:3px;background:#d6d6d6;"></div>
<div class="a" style="left:2454px;top:860.2px;width:3px;height:3px;background:#d6d6d6;"></div>
<div class="a" style="left:2461px;top:860.2px;width:3px;height:3px;background:#d6d6d6;"></div>
<div class="a" style="left:2454px;top:866.8px;width:3px;height:3px;background:#d6d6d6;"></div>
<div class="a" style="left:2461px;top:866.8px;width:3px;height:3px;background:#d6d6d6;"></div>
<div class="a" style="left:2454px;top:873.4px;width:3px;height:3px;background:#d6d6d6;"></div>
<div class="a" style="left:2461px;top:873.4px;width:3px;height:3px;background:#d6d6d6;"></div>
<div class="t a" style="top:908.67px;font-size:20px;line-height:20px;color:#666;font-weight:400;font-family:'Liberation Mono', monospace;left:2458px;">st</div>
<div class="t a" style="top:946.58px;font-size:20.5px;line-height:20.5px;color:#2aa2dc;font-weight:400;font-family:'Liberation Sans', sans-serif;left:2458px;">Te</div>
<div class="t a" style="top:1006.17px;font-size:24.5px;line-height:24.5px;color:#222;font-weight:400;font-family:'Liberation Sans', sans-serif;left:656.5px;transform-origin:0 0;transform:scaleX(0.9495);">2017-08-24T00:00:00.…</div>
<div class="t a" style="top:1006.17px;font-size:24.5px;line-height:24.5px;color:#222;font-weight:400;font-family:'Liberation Sans', sans-serif;right:1418px;">2017</div>
<div class="t a" style="top:1006.17px;font-size:24.5px;line-height:24.5px;color:#222;font-weight:400;font-family:'Liberation Sans', sans-serif;right:1160px;">8</div>
<div class="t a" style="top:1006.17px;font-size:24.5px;line-height:24.5px;color:#222;font-weight:400;font-family:'Liberation Sans', sans-serif;right:894px;">24</div>
<div class="t a" style="top:1006.17px;font-size:24.5px;line-height:24.5px;color:#222;font-weight:400;font-family:'Liberation Sans', sans-serif;right:634px;">4</div>
<div class="t a" style="top:1006.17px;font-size:24.5px;line-height:24.5px;color:#222;font-weight:400;font-family:'Liberation Sans', sans-serif;right:364px;">0</div>
<div class="t a" style="top:1006.17px;font-size:24.5px;line-height:24.5px;color:#222;font-weight:400;font-family:'Liberation Sans', sans-serif;left:2218.5px;transform-origin:0 0;transform:scaleX(0.9431);">C_ID_11c6329480</div>
<div class="t a" style="top:1006.17px;font-size:24.5px;line-height:24.5px;color:#222;font-weight:400;font-family:'Liberation Sans', sans-serif;left:2458.5px;transform-origin:0 0;transform:scaleX(0.7835);">M</div>
<div class="t a" style="top:1060.17px;font-size:24.5px;line-height:24.5px;color:#222;font-weight:400;font-family:'Liberation Sans', sans-serif;left:656.5px;transform-origin:0 0;transform:scaleX(0.9495);">2017-06-26T00:00:00.…</div>
<div class="t a" style="top:1060.17px;font-size:24.5px;line-height:24.5px;color:#222;font-weight:400;font-family:'Liberation Sans', sans-serif;right:1418px;">2017</div>
<div class="t a" style="top:1060.17px;font-size:24.5px;line-height:24.5px;color:#222;font-weight:400;font-family:'Liberation Sans', sans-serif;right:1160px;">6</div>
<div class="t a" style="top:1060.17px;font-size:24.5px;line-height:24.5px;color:#222;font-weight:400;font-family:'Liberation Sans', sans-serif;right:894px;">26</div>
<div class="t a" style="top:1060.17px;font-size:24.5px;line-height:24.5px;color:#222;font-weight:400;font-family:'Liberation Sans', sans-serif;right:634px;">1</div>
<div class="t a" style="top:1060.17px;font-size:24.5px;line-height:24.5px;color:#222;font-weight:400;font-family:'Liberation Sans', sans-serif;right:364px;">0</div>
<div class="t a" style="top:1060.17px;font-size:24.5px;line-height:24.5px;color:#222;font-weight:400;font-family:'Liberation Sans', sans-serif;left:2218.5px;transform-origin:0 0;transform:scaleX(0.9603);">C_ID_1954deb28f</div>
<div class="t a" style="top:1060.17px;font-size:24.5px;line-height:24.5px;color:#222;font-weight:400;font-family:'Liberation Sans', sans-serif;left:2458.5px;transform-origin:0 0;transform:scaleX(0.7835);">M</div>
<div class="t a" style="top:1114.17px;font-size:24.5px;line-height:24.5px;color:#222;font-weight:400;font-family:'Liberation Sans', sans-serif;left:656.5px;transform-origin:0 0;transform:scaleX(0.9495);">2017-03-07T00:00:00.…</div>
<div class="t a" style="top:1114.17px;font-size:24.5px;line-height:24.5px;color:#222;font-weight:400;font-family:'Liberation Sans', sans-serif;right:1418px;">2017</div>
<div class="t a" style="top:1114.17px;font-size:24.5px;line-height:24.5px;color:#222;font-weight:400;font-family:'Liberation Sans', sans-serif;right:1160px;">3</div>
<div class="t a" style="top:1114.17px;font-size:24.5px;line-height:24.5px;color:#222;font-weight:400;font-family:'Liberation Sans', sans-serif;right:894px;">7</div>
<div class="t a" style="top:1114.17px;font-size:24.5px;line-height:24.5px;color:#222;font-weight:400;font-family:'Liberation Sans', sans-serif;right:634px;">2</div>
<div class="t a" style="top:1114.17px;font-size:24.5px;line-height:24.5px;color:#222;font-weight:400;font-family:'Liberation Sans', sans-serif;right:364px;">0</div>
<div class="t a" style="top:1114.17px;font-size:24.5px;line-height:24.5px;color:#222;font-weight:400;font-family:'Liberation Sans', sans-serif;left:2218.5px;transform-origin:0 0;transform:scaleX(0.9348);">C_ID_eab36be51c</div>
<div class="t a" style="top:1114.17px;font-size:24.5px;line-height:24.5px;color:#222;font-weight:400;font-family:'Liberation Sans', sans-serif;left:2458.5px;transform-origin:0 0;transform:scaleX(0.7835);">M</div>
<div class="t a" style="top:1168.17px;font-size:24.5px;line-height:24.5px;color:#222;font-weight:400;font-family:'Liberation Sans', sans-serif;left:656.5px;transform-origin:0 0;transform:scaleX(0.9495);">2017-03-18T00:00:00.…</div>
<div class="t a" style="top:1168.17px;font-size:24.5px;line-height:24.5px;color:#222;font-weight:400;font-family:'Liberation Sans', sans-serif;right:1418px;">2017</div>
<div class="t a" style="top:1168.17px;font-size:24.5px;line-height:24.5px;color:#222;font-weight:400;font-family:'Liberation Sans', sans-serif;right:1160px;">3</div>
<div class="t a" style="top:1168.17px;font-size:24.5px;line-height:24.5px;color:#222;font-weight:400;font-family:'Liberation Sans', sans-serif;right:894px;">18</div>
<div class="t a" style="top:1168.17px;font-size:24.5px;line-height:24.5px;color:#222;font-weight:400;font-family:'Liberation Sans', sans-serif;right:634px;">6</div>
<div class="t a" style="top:1168.17px;font-size:24.5px;line-height:24.5px;color:#222;font-weight:400;font-family:'Liberation Sans', sans-serif;right:364px;">1</div>
<div class="t a" style="top:1168.17px;font-size:24.5px;line-height:24.5px;color:#222;font-weight:400;font-family:'Liberation Sans', sans-serif;left:2218.5px;transform-origin:0 0;transform:scaleX(0.9603);">C_ID_d3421af361</div>
<div class="t a" style="top:1168.17px;font-size:24.5px;line-height:24.5px;color:#222;font-weight:400;font-family:'Liberation Sans', sans-serif;left:2458.5px;transform-origin:0 0;transform:scaleX(0.7835);">M</div>
<div class="t a" style="top:1222.17px;font-size:24.5px;line-height:24.5px;color:#222;font-weight:400;font-family:'Liberation Sans', sans-serif;left:656.5px;transform-origin:0 0;transform:scaleX(0.9495);">2017-03-09T00:00:00.…</div>
<div class="t a" style="top:1222.17px;font-size:24.5px;line-height:24.5px;color:#222;font-weight:400;font-family:'Liberation Sans', sans-serif;right:1418px;">2017</div>
<div class="t a" style="top:1222.17px;font-size:24.5px;line-height:24.5px;color:#222;font-weight:400;font-family:'Liberation Sans', sans-serif;right:1160px;">3</div>
<div class="t a" style="top:1222.17px;font-size:24.5px;line-height:24.5px;color:#222;font-weight:400;font-family:'Liberation Sans', sans-serif;right:894px;">9</div>
<div class="t a" style="top:1222.17px;font-size:24.5px;line-height:24.5px;color:#222;font-weight:400;font-family:'Liberation Sans', sans-serif;right:634px;">4</div>
<div class="t a" style="top:1222.17px;font-size:24.5px;line-height:24.5px;color:#222;font-weight:400;font-family:'Liberation Sans', sans-serif;right:364px;">0</div>
<div class="t a" style="top:1222.17px;font-size:24.5px;line-height:24.5px;color:#222;font-weight:400;font-family:'Liberation Sans', sans-serif;left:2218.5px;transform-origin:0 0;transform:scaleX(0.9670);">C_ID_df40530c82</div>
<div class="t a" style="top:1222.17px;font-size:24.5px;line-height:24.5px;color:#222;font-weight:400;font-family:'Liberation Sans', sans-serif;left:2458.5px;transform-origin:0 0;transform:scaleX(0.7835);">M</div>
<div class="a" style="left:2478px;top:826px;width:3px;height:433px;background:#f2f2f2;"></div>
<div class="a" style="left:2476px;top:826px;width:2px;height:433px;background:#ddd;"></div>
<div class="a" style="left:2466px;top:997px;width:10px;height:26px;background:#a8a8a8;"></div>
<div class="a" style="left:2456px;top:1238px;width:20px;height:19px;background:#d2d2d2;"></div>
<div class="a" style="left:752px;top:1244px;width:442px;height:13px;background:#a6a6a6;border-radius:7px;"></div>
<div class="a" style="left:602px;top:94px;width:1879px;height:631px;background:#fff;box-shadow:0 2px 3px rgba(0,0,0,0.2);"></div>
<div class="t a" style="top:122.25px;font-size:35px;line-height:35px;color:#333;font-weight:400;font-family:'Liberation Sans', sans-serif;left:641px;transform-origin:0 0;transform:scaleX(0.9387);">Formula</div>
<div class="t a" style="top:128.32px;font-size:25.5px;line-height:25.5px;color:#0a84cb;font-weight:400;font-family:'Liberation Sans', sans-serif;left:1871px;transform-origin:0 0;transform:scaleX(0.9507);">Using the formula language</div>
<div class="a" style="left:2190px;top:116px;width:124px;height:53px;box-sizing:border-box;border:2px solid #ccc;background:#fff;"></div>
<div class="t a" style="top:129.75px;font-size:25px;line-height:25px;color:#333;font-weight:700;font-family:'Liberation Sans', sans-serif;left:2208.5px;transform-origin:0 0;transform:scaleX(0.8352);">CANCEL</div>
<div class="a" style="left:2335px;top:116px;width:105px;height:53px;background:#409cf6;"></div>
<div class="t a" style="top:129.75px;font-size:25px;line-height:25px;color:#fff;font-weight:700;font-family:'Liberation Sans', sans-serif;left:2353px;transform-origin:0 0;transform:scaleX(0.8512);">APPLY</div>
<div class="a" style="left:640px;top:194px;width:858px;height:436px;box-sizing:border-box;border:2px solid #ddd;background:#fff;"></div>
<div class="t a" style="top:207.68px;font-size:25.6px;line-height:25.6px;color:#333;font-weight:400;font-family:'Liberation Mono', monospace;left:652.3px;transform-origin:0 0;transform:scaleX(1.0151);"><span style="color:#0b2d72">if</span>(<span style="color:#2ba3da">purchase_dow</span>&gt;<span style="color:#2ba3da">5</span>,<span style="color:#2ba3da">1</span>,<span style="color:#2ba3da">0</span>)</div>
<div class="a" style="left:640px;top:646px;width:858px;height:64px;background:#d8efd6;"></div>
<div class="t a" style="top:664.35px;font-size:27px;line-height:27px;color:#1a6b1a;font-weight:400;font-family:'Liberation Sans', sans-serif;left:652.5px;transform-origin:0 0;transform:scaleX(0.8992);">Formula is valid</div>
<svg class="a" style="left:1461px;top:668px" width="24" height="20" viewBox="0 0 24 20"><path d="M1.5 10.5 L8.5 17 L22.5 2.5" fill="none" stroke="#4bae4f" stroke-width="4.5"/></svg>
<div class="t a" style="top:188.90px;font-size:26px;line-height:26px;color:#333;font-weight:700;font-family:'Liberation Sans', sans-serif;left:1594px;transform-origin:0 0;transform:scaleX(0.8952);">Preview</div>
<div class="t a" style="top:190.90px;font-size:26px;line-height:26px;color:#666;font-weight:400;font-family:'Liberation Sans', sans-serif;left:1792px;transform-origin:0 0;transform:scaleX(0.8935);">Examples</div>
<div class="t a" style="top:190.90px;font-size:26px;line-height:26px;color:#666;font-weight:400;font-family:'Liberation Sans', sans-serif;left:1975.5px;transform-origin:0 0;transform:scaleX(0.9577);">Documentation</div>
<div class="a" style="left:1538px;top:237px;width:938px;height:2px;background:#ddd;"></div>
<div class="a" style="left:1538px;top:233px;width:199px;height:4px;background:#333;"></div>
<div class="a" style="left:1538px;top:255px;width:390px;height:454px;overflow:hidden;">
<div class="a" style="left:0;top:0;width:390px;height:500px;background:#ddd;"></div>
<div class="a" style="left:2px;top:2px;width:192px;height:52px;background:#fff;"></div>
<div class="a" style="left:196px;top:2px;width:192px;height:52px;background:#fff;"></div>
<div class="a" style="left:2px;top:56px;width:192px;height:42px;background:#d8efd7;"></div>
<div class="a" style="left:196px;top:56px;width:192px;height:42px;background:#fff;"></div>
<div class="a" style="left:2px;top:100px;width:192px;height:42px;background:#d8efd7;"></div>
<div class="a" style="left:196px;top:100px;width:192px;height:42px;background:#f8f8f8;"></div>
<div class="a" style="left:2px;top:144px;width:192px;height:42px;background:#d8efd7;"></div>
<div class="a" style="left:196px;top:144px;width:192px;height:42px;background:#fff;"></div>
<div class="a" style="left:2px;top:188px;width:192px;height:42px;background:#d8efd7;"></div>
<div class="a" style="left:196px;top:188px;width:192px;height:42px;background:#f8f8f8;"></div>
<div class="a" style="left:2px;top:232px;width:192px;height:42px;background:#d8efd7;"></div>
<div class="a" style="left:196px;top:232px;width:192px;height:42px;background:#fff;"></div>
<div class="a" style="left:2px;top:276px;width:192px;height:42px;background:#d8efd7;"></div>
<div class="a" style="left:196px;top:276px;width:192px;height:42px;background:#f8f8f8;"></div>
<div class="a" style="left:2px;top:320px;width:192px;height:42px;background:#d8efd7;"></div>
<div class="a" style="left:196px;top:320px;width:192px;height:42px;background:#fff;"></div>
<div class="a" style="left:2px;top:364px;width:192px;height:42px;background:#d8efd7;"></div>
<div class="a" style="left:196px;top:364px;width:192px;height:42px;background:#f8f8f8;"></div>
<div class="a" style="left:2px;top:408px;width:192px;height:42px;background:#d8efd7;"></div>
<div class="a" style="left:196px;top:408px;width:192px;height:42px;background:#fff;"></div>
<div class="a" style="left:2px;top:452px;width:192px;height:42px;background:#d8efd7;"></div>
<div class="a" style="left:196px;top:452px;width:192px;height:42px;background:#f8f8f8;"></div>
</div>
<div class="t a" style="top:270.68px;font-size:24.5px;line-height:24.5px;color:#333;font-weight:700;font-family:'Liberation Sans', sans-serif;left:1546.5px;transform-origin:0 0;transform:scaleX(0.9169);">Sample output</div>
<div class="t a" style="top:270.68px;font-size:24.5px;line-height:24.5px;color:#333;font-weight:700;font-family:'Liberation Sans', sans-serif;left:1740.5px;transform-origin:0 0;transform:scaleX(0.8947);">purchase_dow</div>
<div class="t a" style="top:321.73px;font-size:21.5px;line-height:21.5px;color:#333;font-weight:400;font-family:'Liberation Sans', sans-serif;left:1546.5px;">0</div>
<div class="t a" style="top:321.73px;font-size:21.5px;line-height:21.5px;color:#333;font-weight:400;font-family:'Liberation Sans', sans-serif;left:1740.5px;">4</div>
<div class="t a" style="top:365.73px;font-size:21.5px;line-height:21.5px;color:#333;font-weight:400;font-family:'Liberation Sans', sans-serif;left:1546.5px;">0</div>
<div class="t a" style="top:365.73px;font-size:21.5px;line-height:21.5px;color:#333;font-weight:400;font-family:'Liberation Sans', sans-serif;left:1740.5px;">1</div>
<div class="t a" style="top:409.73px;font-size:21.5px;line-height:21.5px;color:#333;font-weight:400;font-family:'Liberation Sans', sans-serif;left:1546.5px;">0</div>
<div class="t a" style="top:409.73px;font-size:21.5px;line-height:21.5px;color:#333;font-weight:400;font-family:'Liberation Sans', sans-serif;left:1740.5px;">2</div>
<div class="t a" style="top:453.73px;font-size:21.5px;line-height:21.5px;color:#333;font-weight:400;font-family:'Liberation Sans', sans-serif;left:1546.5px;">1</div>
<div class="t a" style="top:453.73px;font-size:21.5px;line-height:21.5px;color:#333;font-weight:400;font-family:'Liberation Sans', sans-serif;left:1740.5px;">6</div>
<div class="t a" style="top:497.73px;font-size:21.5px;line-height:21.5px;color:#333;font-weight:400;font-family:'Liberation Sans', sans-serif;left:1546.5px;">0</div>
<div class="t a" style="top:497.73px;font-size:21.5px;line-height:21.5px;color:#333;font-weight:400;font-family:'Liberation Sans', sans-serif;left:1740.5px;">4</div>
<div class="t a" style="top:541.73px;font-size:21.5px;line-height:21.5px;color:#333;font-weight:400;font-family:'Liberation Sans', sans-serif;left:1546.5px;">1</div>
<div class="t a" style="top:541.73px;font-size:21.5px;line-height:21.5px;color:#333;font-weight:400;font-family:'Liberation Sans', sans-serif;left:1740.5px;">7</div>
<div class="t a" style="top:585.73px;font-size:21.5px;line-height:21.5px;color:#333;font-weight:400;font-family:'Liberation Sans', sans-serif;left:1546.5px;">1</div>
<div class="t a" style="top:585.73px;font-size:21.5px;line-height:21.5px;color:#333;font-weight:400;font-family:'Liberation Sans', sans-serif;left:1740.5px;">6</div>
<div class="t a" style="top:629.73px;font-size:21.5px;line-height:21.5px;color:#333;font-weight:400;font-family:'Liberation Sans', sans-serif;left:1546.5px;">1</div>
<div class="t a" style="top:629.73px;font-size:21.5px;line-height:21.5px;color:#333;font-weight:400;font-family:'Liberation Sans', sans-serif;left:1740.5px;">7</div>
<div class="t a" style="top:673.73px;font-size:21.5px;line-height:21.5px;color:#333;font-weight:400;font-family:'Liberation Sans', sans-serif;left:1546.5px;">0</div>
<div class="t a" style="top:673.73px;font-size:21.5px;line-height:21.5px;color:#333;font-weight:400;font-family:'Liberation Sans', sans-serif;left:1740.5px;">2</div>
<div class="a" style="left:2466px;top:255px;width:10px;height:386px;background:#a8a8a8;border-radius:5px;"></div>
<div class="a" style="left:601px;top:390px;width:29px;height:200px;background:#c8c8c8;border-radius:0 15px 15px 0;"></div>
<div class="a" style="left:609px;top:430px;width:2px;height:120px;background:#fff;"></div>
<div class="a" style="left:617px;top:430px;width:2px;height:120px;background:#fff;"></div>
<div class="a" style="left:2481px;top:0px;width:79px;height:1276px;background:#fff;"></div>
<div class="a" style="left:2480px;top:0px;width:2px;height:1276px;background:#dcdcdc;"></div>
<svg class="a" style="left:2510px;top:40px" width="24" height="20" viewBox="0 0 24 20"><path d="M23.5 10 H2 M10.5 1 L1.5 10 L10.5 19" fill="none" stroke="#333" stroke-width="2"/></svg>
<div class="a" style="left:2501.5px;top:125.5px;width:41px;height:41px;border-radius:21px;background:#a1cbfb;"></div>
<div class="a" style="left:2501.5px;top:221.5px;width:41px;height:41px;border-radius:21px;background:#a1cbfb;"></div>
<div class="a" style="left:2501.5px;top:317.5px;width:41px;height:41px;border-radius:21px;background:#a1cbfb;"></div>
<div class="a" style="left:2501.5px;top:413.5px;width:41px;height:41px;border-radius:21px;background:#a1cbfb;"></div>
<svg class="a" style="left:2502px;top:126px" width="40" height="40" viewBox="0 0 40 40"><path d="M20 10.5 V29.5 M10.5 20 H29.5" stroke="#fff" stroke-width="2.6"/></svg>
<svg class="a" style="left:2502px;top:222px" width="40" height="40" viewBox="0 0 40 40"><circle cx="20" cy="12.5" r="2" fill="#fff"/><path d="M20 17 V29" stroke="#fff" stroke-width="3" stroke-linecap="round"/></svg>
<svg class="a" style="left:2498px;top:314px" width="48" height="48" viewBox="0 0 1276 1276">
<g fill="none" stroke="#fff" stroke-width="78" stroke-linejoin="round" stroke-linecap="round">
<path d="M300 700 Q275 640 275 570 Q285 312 530 310 Q782 318 785 570 Q778 828 530 832 Q470 832 420 810 Q345 835 285 830 Q315 770 300 700 Z"/>
<path d="M835 410 Q988 490 990 660 Q985 720 965 775 Q990 850 985 905 Q920 905 860 875 Q760 905 665 885"/>
</g></svg>
<svg class="a" style="left:2502px;top:414px" width="40" height="40" viewBox="0 0 40 40"><circle cx="20" cy="20" r="13.5" fill="none" stroke="#fff" stroke-width="2.6"/><path d="M19.5 11 V21 H12" fill="none" stroke="#fff" stroke-width="2.6"/></svg>
</div></body></html>
